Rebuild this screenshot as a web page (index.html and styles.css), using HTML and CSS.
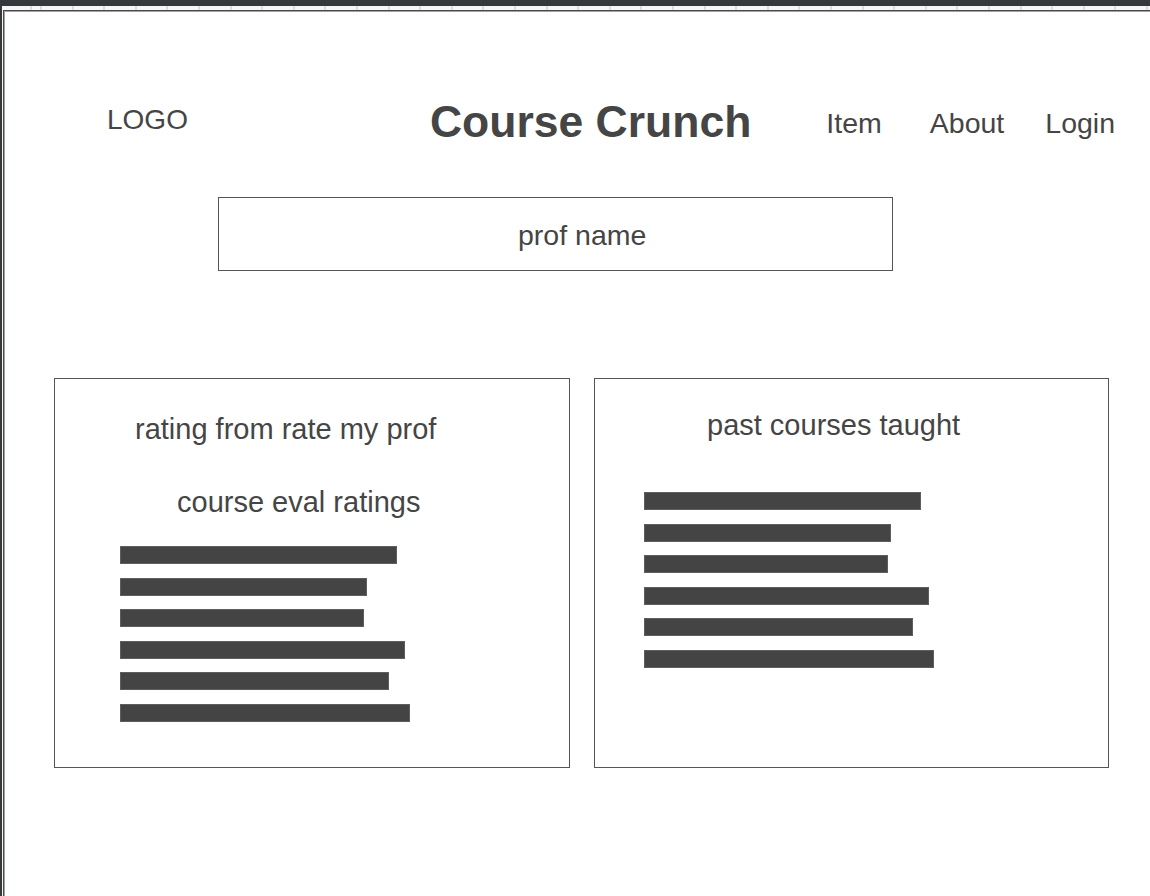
FILE: index.html
```html
<!DOCTYPE html>
<html lang="en">
<head>
<meta charset="utf-8">
<title>Course Crunch</title>
<link rel="stylesheet" href="styles.css">
</head>
<body>
<div class="frame">
  <div class="page">
    <header class="header">
      <div class="logo">LOGO</div>
      <h1 class="title">Course Crunch</h1>
      <nav class="nav">
        <a class="nav-link nav-item" href="#">Item</a>
        <a class="nav-link nav-about" href="#">About</a>
        <a class="nav-link" href="#">Login</a>
      </nav>
    </header>

    <div class="search">prof name</div>

    <section class="cards">
      <div class="card card-ratings">
        <div class="card-heading rmp">rating from rate my prof</div>
        <div class="card-heading eval">course eval ratings</div>
        <div class="bars">
          <div class="bar" style="width:277px"></div>
          <div class="bar" style="width:247px"></div>
          <div class="bar" style="width:244px"></div>
          <div class="bar" style="width:285px"></div>
          <div class="bar" style="width:269px"></div>
          <div class="bar" style="width:290px"></div>
        </div>
      </div>
      <div class="card card-courses">
        <div class="card-heading past">past courses taught</div>
        <div class="bars">
          <div class="bar" style="width:277px"></div>
          <div class="bar" style="width:247px"></div>
          <div class="bar" style="width:244px"></div>
          <div class="bar" style="width:285px"></div>
          <div class="bar" style="width:269px"></div>
          <div class="bar" style="width:290px"></div>
        </div>
      </div>
    </section>
  </div>
</div>
</body>
</html>
```

FILE: styles.css
```css
html, body {
  margin: 0;
  height: 100%;
}

body {
  box-sizing: border-box;
  padding: 6px 0 0 2px;
  background: #35383c;
  overflow: hidden;
  font-family: "Liberation Sans", Arial, sans-serif;
  color: #454545;
}

.frame {
  height: 100%;
  box-sizing: border-box;
  padding: 4px 0 0 1px;
  background-color: #f6f6f6;
  background-image: repeating-linear-gradient(90deg, #dddddd 0 2px, transparent 2px 31.6px);
  background-position: 38px 0;
}

.page {
  height: 100%;
  box-sizing: border-box;
  background: #fff;
  border-top: 1px solid #4a4a4a;
  border-left: 1px solid #4a4a4a;
  box-shadow: inset 1px 1px 0 #a3a3a3;
  overflow: hidden;
}

/* Header */
.header {
  display: flex;
  align-items: flex-start;
  padding: 86px 0 0 103px;
}

.logo {
  font-size: 28px;
  margin-top: 7px;
}

.title {
  margin: 0 0 0 242px;
  font-size: 44.5px;
  font-weight: bold;
  color: #454545;
}

.nav {
  display: flex;
  margin: 10px 0 0 75px;
}

.nav-link {
  font-size: 28.5px;
  color: #454545;
  text-decoration: none;
}

.nav-item {
  margin-right: 48px;
}

.nav-about {
  margin-right: 41px;
}

/* Search */
.search {
  box-sizing: border-box;
  width: 675px;
  height: 74px;
  margin: 50px 0 0 214px;
  padding: 21px 0 0 299px;
  border: 1px solid #555;
  font-size: 28.5px;
}

/* Cards */
.cards {
  display: flex;
  gap: 24px;
  margin: 107px 0 0 50px;
}

.card {
  box-sizing: border-box;
  height: 390px;
  border: 1px solid #555;
}

.card-ratings {
  width: 516px;
  padding: 34px 0 0 65px;
}

.card-courses {
  width: 515px;
  padding: 30px 0 0 49px;
}

.card-heading {
  font-size: 29px;
}

.rmp {
  margin-left: 15px;
}

.eval {
  margin: 40px 0 0 57px;
}

.past {
  margin-left: 63px;
}

.bars {
  display: flex;
  flex-direction: column;
  gap: 13.5px;
}

.card-ratings .bars {
  margin-top: 27px;
}

.card-courses .bars {
  margin-top: 50px;
}

.bar {
  height: 18px;
  box-sizing: border-box;
  background: #444;
  border: 1px solid #5e5e5e;
}
```
